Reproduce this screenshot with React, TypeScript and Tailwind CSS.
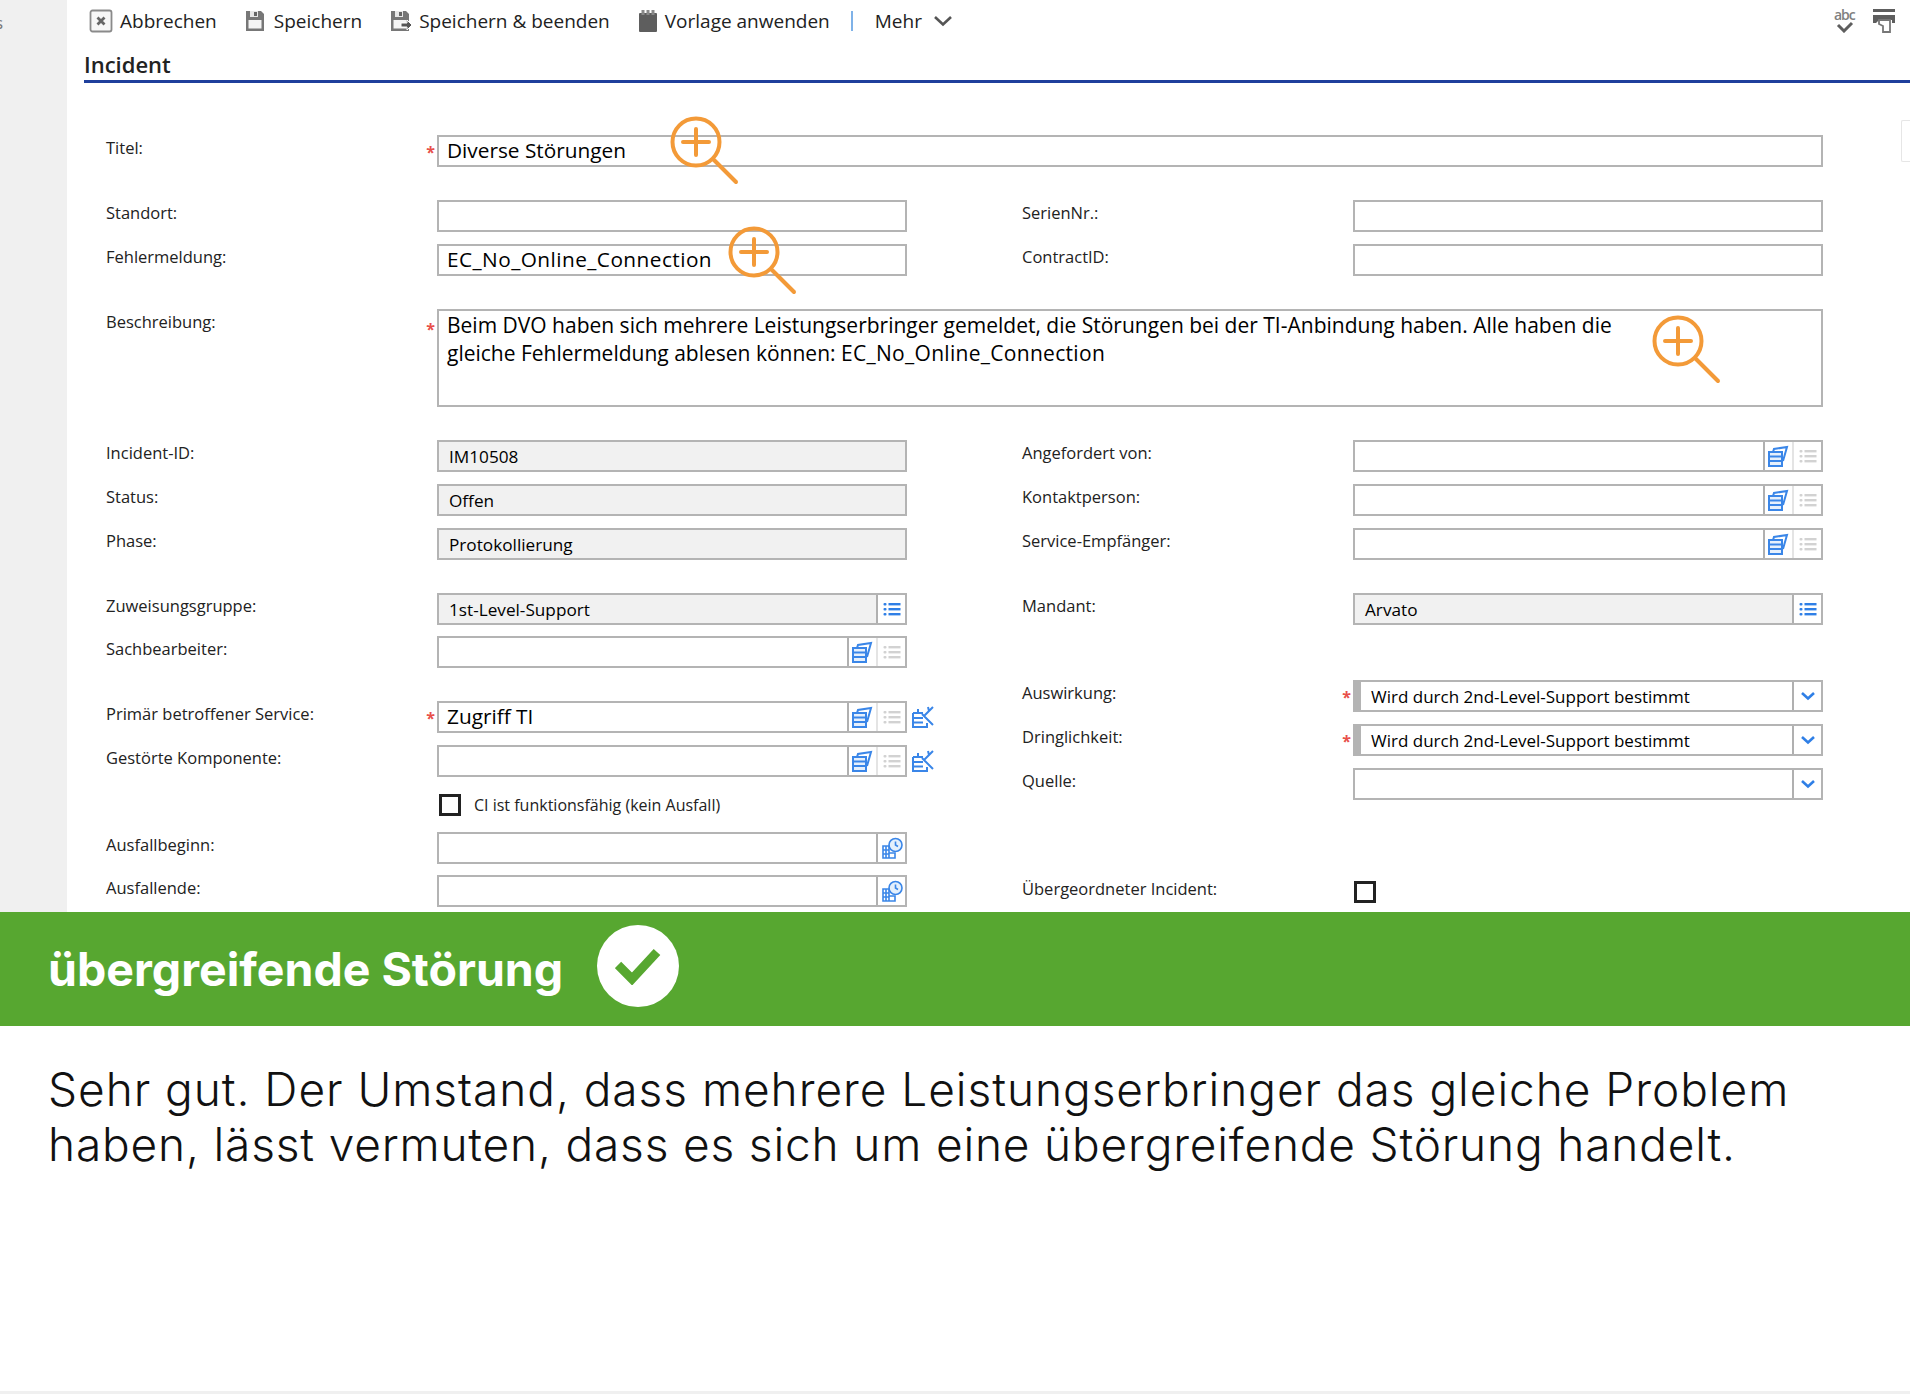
import React from "react";

const ui = "font-['Open_Sans','Noto_Sans',sans-serif]";

const Magnifier = ({ className }: { className: string }) => (
  <svg className={className} width="74" height="72" viewBox="0 0 74 72" fill="none" stroke="#f39a38" strokeWidth="4" strokeLinecap="round">
    <circle cx="26" cy="26" r="23.5" />
    <path d="M26 13v26M13 26h26" />
    <path d="M44 44l22 22" />
  </svg>
);

const DbIcon = () => (
  <svg width="22" height="22" viewBox="0 0 22 22" fill="none" stroke="#3a86e8" strokeWidth="2">
    <path d="M2 7h13v14H2z" fill="#e6f0fc" />
    <path d="M2 11.500h13M2 16h13M6 7l1-3 13-2-4 14" />
  </svg>
);

const ListIcon = ({ active }: { active?: boolean }) => (
  <svg width="18" height="16" viewBox="0 0 18 16" fill={active ? "#2f7fe6" : "#d2d2d2"}>
    <rect x="0.5" y="2" width="3" height="2.4" rx="1" />
    <rect x="5.5" y="2" width="12" height="2.4" />
    <rect x="0.5" y="7" width="3" height="2.4" rx="1" />
    <rect x="5.5" y="7" width="12" height="2.4" />
    <rect x="0.5" y="12" width="3" height="2.4" rx="1" />
    <rect x="5.5" y="12" width="12" height="2.4" />
  </svg>
);

const CiIcon = () => (
  <svg width="24" height="24" viewBox="0 0 24 24" fill="none" stroke="#3a86e8" strokeWidth="2">
    <path d="M2 8h10M2 8v14h14v-4M2 13h10M2 17.500h10M7 4v4" />
    <path d="M11 9l11 11M22 2l-9 9M17 2l1 4" />
  </svg>
);

const DateIcon = () => (
  <svg width="24" height="24" viewBox="0 0 24 24" fill="none" stroke="#3a86e8" strokeWidth="1.6">
    <circle cx="15.500" cy="9" r="6.500" fill="#e4f0fc" />
    <path d="M15.500 5.500V9l2.500 1.500" />
    <path d="M3 10h6v12H3zM3 14h6M3 18h6M6 10v12M9 17h6v5H9z" />
  </svg>
);

const Chevron = () => (
  <svg width="16" height="10" viewBox="0 0 16 10" fill="none" stroke="#2f7fe6" strokeWidth="2.600">
    <path d="M2 2l6 5.500L14 2" />
  </svg>
);

const Cell = ({ children, line }: { children: React.ReactNode; line?: string }) => (
  <div className={`flex h-full w-[29px] shrink-0 items-center justify-center border-l-2 bg-white ${line ?? "border-[#b0b0b0]"}`}>
    {children}
  </div>
);

type FieldProps = {
  value?: React.ReactNode;
  readOnly?: boolean;
  bar?: boolean;
  big?: boolean;
  children?: React.ReactNode;
};

const Field = ({ value, readOnly, bar, big, children }: FieldProps) => (
  <div className={`flex h-[32px] min-w-0 flex-1 items-center border-2 border-[#b4b4b4] ${readOnly ? "bg-[#f1f1f1]" : "bg-white"}`}>
    {bar && <div className="h-full w-[6px] shrink-0 bg-[#b4b4b4]" />}
    <div className={`min-w-0 flex-1 truncate text-black ${big ? "pl-[8px] text-[20.800px]" : bar ? "mt-[1px] pl-[10px] text-[17px]" : "mt-[1px] pl-[10px] text-[17.200px]"}`}>
      {value}
    </div>
    {children}
  </div>
);

const Row = ({ label, req, children }: { label: string; req?: boolean; children: React.ReactNode }) => (
  <div className="flex items-center">
    <div className="flex w-[332px] shrink-0 items-center justify-between pr-[2px]">
      <span className="-mt-[6px] ml-[1px] text-[16.500px] font-medium text-[#222]">{label}</span>
      {req && <span className="mt-[2px] text-[16px] font-bold leading-none text-[#e8504a]">*</span>}
    </div>
    {children}
  </div>
);

const Lookup = () => (
  <>
    <Cell line="border-[#b0b0b0] pr-[2px]"><DbIcon /></Cell>
    <Cell line="border-[#e4e4e4]"><ListIcon /></Cell>
  </>
);

const ToolItem = ({ icon, label }: { icon: React.ReactNode; label: string }) => (
  <div className="flex items-center gap-[7px]">
    {icon}
    <span className="text-[19px] text-[#222]">{label}</span>
  </div>
);

const SaveIcon = ({ arrow }: { arrow?: boolean }) => (
  <svg width="22" height="24" viewBox="0 0 22 24" fill="none">
    <path d="M1 2h15l3 3v17H1z" fill="#777" />
    <path d="M5 2h8v6H5z" fill="#e8e8e8" />
    <path d="M9 3h3v4H9z" fill="#666" />
    <path d="M3.500 11h13v8.500h-13z" fill="#f4f4f4" />
    {arrow && <path d="M11 14h6v-3l5 5-5 5v-3h-6z" fill="#555" stroke="#fff" strokeWidth="1" />}
  </svg>
);

export default function App() {
  return (
    <div className={`flex h-[1394px] w-full flex-col overflow-hidden bg-white ${ui}`}>
      <div className="flex h-[912px] shrink-0 overflow-hidden">
        <div className="w-[67px] shrink-0 overflow-hidden bg-[#f0f0f0]">
          <div className="-ml-[5px] mt-[10px] text-[17px] text-[#777]">s</div>
        </div>

        <div className="relative min-w-0 flex-1">
          {/* toolbar */}
          <div className="flex h-[42px] items-center pl-[22px] pr-[14px]">
            <div className="flex items-center gap-[28px]">
              <ToolItem
                label="Abbrechen"
                icon={
                  <svg width="24" height="24" viewBox="0 0 24 24" fill="none" stroke="#8a8a8a" strokeWidth="1.800">
                    <rect x="1.500" y="1.500" width="21" height="21" rx="2" fill="#f7f7f7" />
                    <path d="M8.500 8.500l7 7M15.500 8.500l-7 7" stroke="#666" strokeWidth="2.800" />
                  </svg>
                }
              />
              <ToolItem label="Speichern" icon={<SaveIcon />} />
              <ToolItem label="Speichern & beenden" icon={<SaveIcon arrow />} />
              <ToolItem
                label="Vorlage anwenden"
                icon={
                  <svg width="20" height="24" viewBox="0 0 20 24" fill="#5e5e5e">
                    <rect x="1" y="4" width="18" height="19" rx="1" />
                    <path d="M3.500 1h3v5h-3zM8.500 1h3v5h-3zM13.500 1h3v5h-3z" fill="#8a8a8a" />
                  </svg>
                }
              />
            </div>
            <div className="ml-[21px] h-[20px] w-[2px] bg-[#7fb2e8]" />
            <span className="ml-[22px] text-[19px] text-[#222]">Mehr</span>
            <svg className="ml-[11px]" width="20" height="12" viewBox="0 0 20 12" fill="none" stroke="#555" strokeWidth="2.600">
              <path d="M2 2l8 7.500L18 2" />
            </svg>
            <div className="ml-auto flex items-center gap-[17px]">
              <div className="relative h-[24px] w-[22px]">
                <span className="absolute -top-[3px] left-[1px] text-[14px] font-semibold leading-[18px] tracking-[-1px] text-[#808080]">abc</span>
                <svg className="absolute bottom-0 left-[3px]" width="18" height="12" viewBox="0 0 18 12" fill="none" stroke="#5e5e5e" strokeWidth="3">
                  <path d="M2 4l6 6 8-8" />
                </svg>
              </div>
              <svg width="24" height="24" viewBox="0 0 24 24" fill="none">
                <rect x="1" y="0" width="22" height="3" fill="#5e5e5e" />
                <path d="M1 6h22v8h-3v-3H7l-3 3H1z" fill="#5e5e5e" />
                <path d="M7 11h11v12H11v-6l-4-2z" stroke="#777" strokeWidth="1.800" />
              </svg>
            </div>
          </div>

          {/* heading */}
          <div className="ml-[17px] flex h-[41px] items-end border-b-[3px] border-[#1f3f9c] pb-[5px]">
            <span className="text-[22px] font-semibold leading-none text-[#222]">Incident</span>
          </div>

          {/* small tab on the right edge */}
          <div className="absolute right-0 top-[120px] h-[42px] w-[9px] rounded-l-[2px] border border-r-0 border-[#e6e6e6] bg-white" />

          <div className="pl-[38px] pt-[52px]">
            <div className="relative w-[1718px]">
              <Row label="Titel:" req><Field big value="Diverse Störungen" /></Row>
              <Magnifier className="absolute left-[565px] top-[-19px]" />
            </div>

            <div className="mt-[33px] flex gap-[114px]">
              <div className="flex w-[802px] flex-col gap-[12px]">
                <Row label="Standort:"><Field /></Row>
                <div className="relative">
                  <Row label="Fehlermeldung:">
                    <Field big value={<span className="tracking-[0.450px]">EC_No_Online_Connection</span>} />
                  </Row>
                  <Magnifier className="absolute left-[623px] top-[-18px]" />
                </div>
              </div>
              <div className="flex w-[802px] flex-col gap-[12px]">
                <Row label="SerienNr.:"><Field /></Row>
                <Row label="ContractID:"><Field /></Row>
              </div>
            </div>

            <div className="relative mt-[33px] flex w-[1718px]">
              <div className="flex w-[332px] shrink-0 items-start justify-between pr-[2px]">
                <span className="ml-[1px] mt-[1px] text-[16.500px] font-medium text-[#222]">Beschreibung:</span>
                <span className="mt-[12px] text-[16px] font-bold leading-none text-[#e8504a]">*</span>
              </div>
              <div className="h-[98px] flex-1 border-2 border-[#b4b4b4] pl-[8px] pr-[190px] text-[21px] leading-[28px] text-black">
                Beim DVO haben sich mehrere Leistungserbringer gemeldet, die Störungen bei der TI-Anbindung haben. Alle haben die gleiche Fehlermeldung ablesen können: <span className="tracking-[0.300px]">EC_No_Online_Connection</span>
              </div>
              <Magnifier className="absolute left-[1547px] top-[6px]" />
            </div>

            <div className="mt-[33px] flex gap-[114px]">
              {/* left column */}
              <div className="flex w-[802px] flex-col">
                <div className="flex flex-col gap-[12px]">
                  <Row label="Incident-ID:"><Field readOnly value="IM10508" /></Row>
                  <Row label="Status:"><Field readOnly value="Offen" /></Row>
                  <Row label="Phase:"><Field readOnly value="Protokollierung" /></Row>
                </div>
                <div className="mt-[33px] flex flex-col gap-[11px]">
                  <Row label="Zuweisungsgruppe:">
                    <Field readOnly value="1st-Level-Support"><Cell><ListIcon active /></Cell></Field>
                  </Row>
                  <Row label="Sachbearbeiter:"><Field><Lookup /></Field></Row>
                </div>
                <div className="mt-[33px] flex flex-col gap-[12px]">
                  <div className="relative">
                    <Row label="Primär betroffener Service:" req><Field big value="Zugriff TI"><Lookup /></Field></Row>
                    <div className="absolute left-[806px] top-[4px]"><CiIcon /></div>
                  </div>
                  <div className="relative">
                    <Row label="Gestörte Komponente:"><Field><Lookup /></Field></Row>
                    <div className="absolute left-[806px] top-[4px]"><CiIcon /></div>
                  </div>
                </div>
                <div className="ml-[334px] mt-[17px] flex h-[21px] items-center gap-[13px]">
                  <div className="h-[22px] w-[22px] border-[3px] border-[#222]" />
                  <span className="text-[16px] text-[#222]">CI ist funktionsfähig (kein Ausfall)</span>
                </div>
                <div className="mt-[17px] flex flex-col gap-[11px]">
                  <Row label="Ausfallbeginn:"><Field><Cell><DateIcon /></Cell></Field></Row>
                  <Row label="Ausfallende:"><Field><Cell><DateIcon /></Cell></Field></Row>
                </div>
              </div>

              {/* right column */}
              <div className="flex w-[802px] flex-col">
                <div className="flex flex-col gap-[12px]">
                  <Row label="Angefordert von:"><Field><Lookup /></Field></Row>
                  <Row label="Kontaktperson:"><Field><Lookup /></Field></Row>
                  <Row label="Service-Empfänger:"><Field><Lookup /></Field></Row>
                </div>
                <div className="mt-[33px]">
                  <Row label="Mandant:">
                    <Field readOnly value="Arvato"><Cell><ListIcon active /></Cell></Field>
                  </Row>
                </div>
                <div className="mt-[55px] flex flex-col gap-[12px]">
                  <Row label="Auswirkung:" req>
                    <Field bar value="Wird durch 2nd-Level-Support bestimmt"><Cell><Chevron /></Cell></Field>
                  </Row>
                  <Row label="Dringlichkeit:" req>
                    <Field bar value="Wird durch 2nd-Level-Support bestimmt"><Cell><Chevron /></Cell></Field>
                  </Row>
                  <Row label="Quelle:"><Field><Cell><Chevron /></Cell></Field></Row>
                </div>
                <div className="mt-[81px] flex items-center">
                  <span className="-mt-[5px] ml-[1px] w-[332px] shrink-0 text-[16.500px] font-medium text-[#222]">Übergeordneter Incident:</span>
                  <div className="h-[22px] w-[22px] border-[3px] border-[#222]" />
                </div>
              </div>
            </div>
          </div>
        </div>
      </div>

      <div className="flex h-[114px] shrink-0 items-center gap-[34px] bg-[#57a730] pl-[48px]">
        <span className="mt-[1px] font-['Inter',sans-serif] text-[46.500px] font-bold leading-none text-white">übergreifende Störung</span>
        <div className="-mt-[7px] flex h-[82px] w-[82px] items-center justify-center rounded-full bg-white">
          <svg width="46" height="38" viewBox="0 0 46 38" fill="none" stroke="#57a730" strokeWidth="9">
            <path d="M3 18l14 14L42 5" />
          </svg>
        </div>
      </div>

      <div className="flex-1 pl-[48px] pr-[30px] pt-[36px] font-['Inter',sans-serif] text-[46px] font-light leading-[55px] tracking-[0.960px] text-[#111]">
        Sehr gut. Der Umstand, dass mehrere Leistungserbringer das gleiche Problem<br />
        <span className="tracking-[0.830px]">haben, lässt vermuten, dass es sich um eine übergreifende Störung handelt.</span>
      </div>
      <div className="h-[3px] shrink-0 bg-[#f0f0f0]" />
    </div>
  );
}
